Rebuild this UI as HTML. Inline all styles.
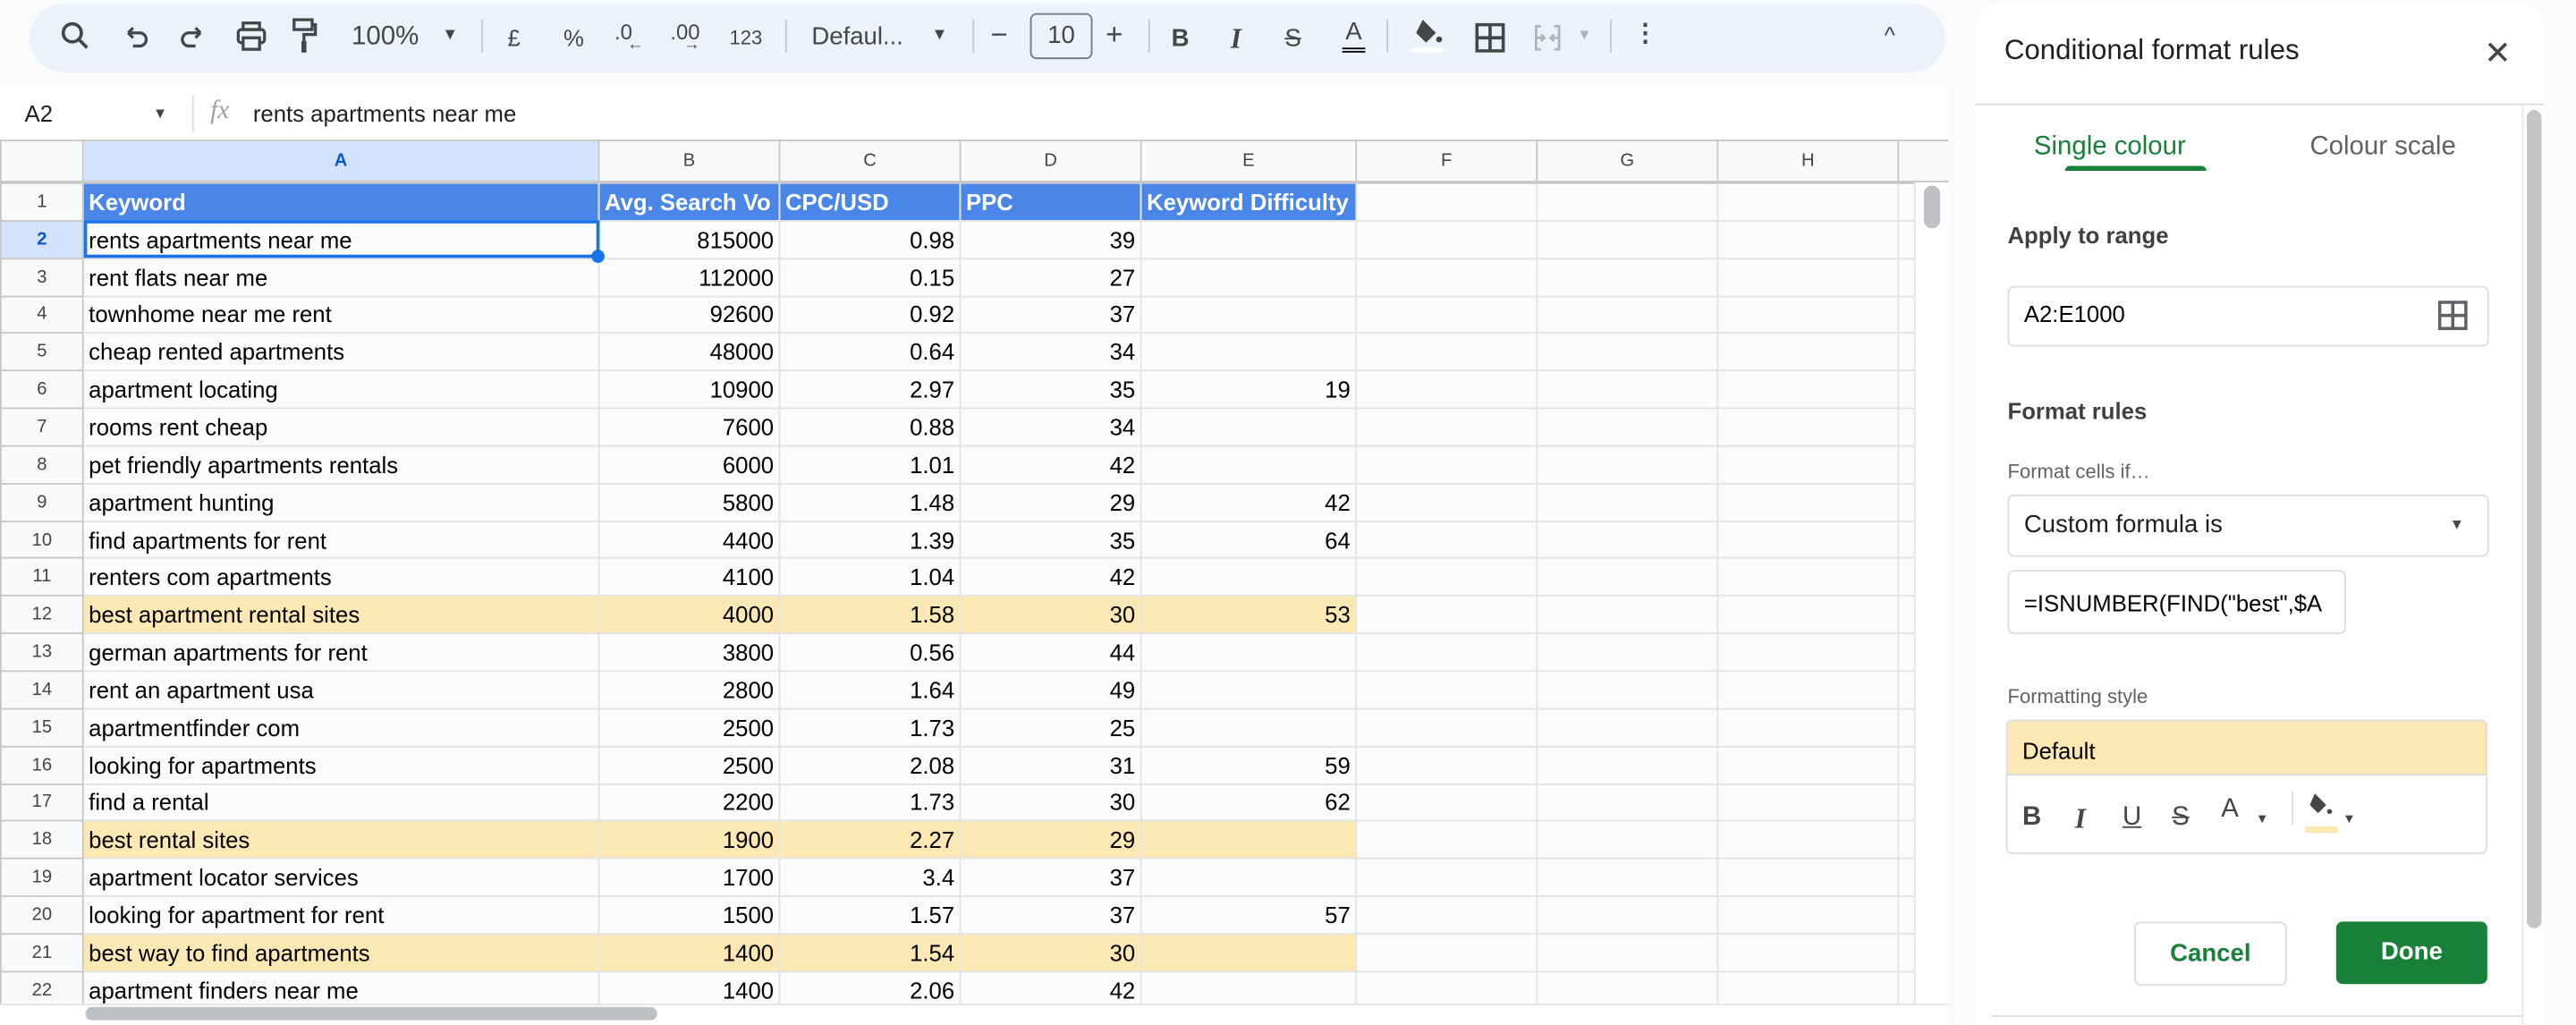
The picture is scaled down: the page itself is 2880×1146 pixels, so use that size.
<!DOCTYPE html>
<html><head><meta charset="utf-8">
<style>
html,body{margin:0;padding:0;width:2880px;height:1146px;overflow:hidden;background:#f9fbfd;}
#w{position:absolute;left:0;top:0;width:1568px;height:624px;transform:scale(1.836735);transform-origin:0 0;font-family:"Liberation Sans",Arial,sans-serif;color:#000;background:#f9fbfd;overflow:hidden}
.a{position:absolute}
.tb{left:18px;top:2px;width:1166px;height:42px;border-radius:21px;background:#edf2fa}
.ic{position:absolute;top:12px;color:#444746;font-size:15px}
.sep{position:absolute;top:12px;width:1px;height:20px;background:#c4c7c5}
table{border-collapse:collapse;table-layout:fixed;position:absolute;left:0;top:85px}
td{height:21.85px;border:1px solid #e2e3e3;padding:0 3px;font-size:14px;white-space:nowrap;overflow:hidden;line-height:20px}
td.n{background:#f8f9fa;color:#444;text-align:center;font-size:11px;border-color:#c7c7c7}
tr.h td{height:24px;background:#f8f9fa;color:#444;text-align:center;font-size:11px;border-color:#c7c7c7;border-bottom:2px solid #c7c7c7}
td.r{text-align:right}
tr.hd td.c{background:#4a86e8;color:#fff;font-weight:bold}
tr.y td.c{background:#fce8b2}
.pl{font-size:14px;color:#1f1f1f}
.box{position:absolute;border:1px solid #dadce0;border-radius:4px;background:#fff}
</style></head><body><div id="w">
<div class="a tb"></div>
<svg class="a" style="left:36px;top:12px" width="20" height="20" viewBox="0 0 20 20"><circle cx="8" cy="8" r="5.5" fill="none" stroke="#444746" stroke-width="2"/><path d="M12 12l5 5" stroke="#444746" stroke-width="2"/></svg>
<svg class="a" style="left:74px;top:13px" width="18" height="18" viewBox="0 0 18 18"><path d="M4 7h7a4 4 0 010 8H7M4 7l3-3M4 7l3 3" fill="none" stroke="#444746" stroke-width="1.8"/></svg>
<svg class="a" style="left:108px;top:13px" width="18" height="18" viewBox="0 0 18 18"><path d="M14 7H7a4 4 0 000 8h4M14 7l-3-3M14 7l-3 3" fill="none" stroke="#444746" stroke-width="1.8"/></svg>
<svg class="a" style="left:143px;top:13px" width="20" height="18" viewBox="0 0 20 18"><rect x="5" y="1" width="10" height="4" fill="none" stroke="#444746" stroke-width="1.8"/><rect x="2" y="5" width="16" height="8" rx="2" fill="none" stroke="#444746" stroke-width="1.8"/><rect x="5" y="10" width="10" height="7" fill="#edf2fa" stroke="#444746" stroke-width="1.8"/></svg>
<svg class="a" style="left:177px;top:11px" width="16" height="22" viewBox="0 0 16 22"><rect x="2" y="1" width="11" height="6" fill="none" stroke="#444746" stroke-width="1.8"/><path d="M13 4h2v6H8v4" fill="none" stroke="#444746" stroke-width="1.8"/><rect x="6.5" y="14" width="3" height="7" fill="#444746"/></svg>
<div class="ic" style="left:214px;top:14px;font-size:16px">100%</div>
<div class="ic" style="left:269px;top:16px;font-size:10px">▼</div>
<div class="sep" style="left:293px"></div>
<div class="ic" style="left:309px;top:15px;font-size:14px">£</div>
<div class="ic" style="left:343px;top:15px;font-size:14px">%</div>
<div class="ic" style="left:374px;top:12px;font-size:13px">.0<span style="font-size:10px;position:relative;top:6px;left:-3px">←</span></div>
<div class="ic" style="left:408px;top:12px;font-size:13px">.00<span style="font-size:10px;position:relative;top:6px;left:-10px">→</span></div>
<div class="ic" style="left:444px;top:16px;font-size:12px">123</div>
<div class="sep" style="left:478px"></div>
<div class="ic" style="left:494px;top:14px;font-size:15px">Defaul...</div>
<div class="ic" style="left:567px;top:16px;font-size:10px">▼</div>
<div class="sep" style="left:592px"></div>
<div class="ic" style="left:603px;top:11px;font-size:18px">−</div>
<div class="a" style="left:627px;top:8px;width:36px;height:26px;border:1px solid #747775;border-radius:4px;text-align:center;line-height:26px;font-size:15px;color:#444746">10</div>
<div class="ic" style="left:673px;top:11px;font-size:18px">+</div>
<div class="sep" style="left:699px"></div>
<div class="ic" style="left:713px;top:15px;font-weight:bold">B</div>
<div class="ic" style="left:749px;top:14px;font-style:italic;font-family:'Liberation Serif',serif;font-size:17px;font-weight:bold">I</div>
<div class="ic" style="left:782px;top:15px;text-decoration:line-through">S</div>
<div class="ic" style="left:817px;top:11px;border-bottom:3px double #000;padding:0 2px 1px">A</div>
<div class="sep" style="left:844px"></div>
<svg class="a" style="left:858px;top:10px" width="22" height="24" viewBox="0 0 22 24"><path d="M8 2l8 8-6 6-6-6z" fill="#444746"/><circle cx="18" cy="14" r="1.8" fill="#444746"/><rect x="1" y="19" width="20" height="3" fill="#fff"/></svg>
<svg class="a" style="left:898px;top:14px" width="18" height="18" viewBox="0 0 18 18"><path d="M1 1h16v16H1zM9 1v16M1 9h16" fill="none" stroke="#444746" stroke-width="2"/></svg>
<svg class="a" style="left:933px;top:14px" width="18" height="18" viewBox="0 0 18 18"><path d="M5 2H2v14h3M13 2h3v14h-3M2 9h5M16 9h-5M5 7l2 2-2 2M13 7l-2 2 2 2" fill="none" stroke="#b0b3b5" stroke-width="1.5"/></svg>
<div class="ic" style="left:960px;top:16px;font-size:9px;color:#b0b3b5">▼</div>
<div class="sep" style="left:980px"></div>
<div class="ic" style="left:994px;top:11px;font-weight:bold">⋮</div>
<div class="ic" style="left:1147px;top:13px;font-size:14px">^</div>

<div class="a" style="left:0;top:52px;width:1186px;height:33px;background:#fff"></div>
<div class="a pl" style="left:15px;top:61px;font-size:14px">A2</div>
<div class="a" style="left:93px;top:64px;font-size:9px;color:#444">▼</div>
<div class="a" style="left:117px;top:58px;width:1px;height:22px;background:#dadce0"></div>
<div class="a" style="left:128px;top:59px;font-family:'Liberation Serif',serif;font-style:italic;color:#9aa0a6;font-size:16px">fx</div>
<div class="a pl" style="left:154px;top:61px;font-size:14px">rents apartments near me</div>

<table>
<colgroup><col style="width:50px"><col style="width:314px"><col style="width:110px"><col style="width:110px"><col style="width:110px"><col style="width:131px"><col style="width:110px"><col style="width:110px"><col style="width:110px"><col style="width:40px"></colgroup>
<tr class="h"><td></td><td style="background:#d3e3fd;color:#0b57d0;font-weight:bold">A</td><td>B</td><td>C</td><td>D</td><td>E</td><td>F</td><td>G</td><td>H</td><td></td></tr>
<tr class="hd"><td class="n">1</td><td class="c">Keyword</td><td class="c">Avg. Search Vo</td><td class="c">CPC/USD</td><td class="c">PPC</td><td class="c">Keyword Difficulty</td><td></td><td></td><td></td><td></td></tr>
<tr><td class="n" style="background:#d3e3fd;color:#0b57d0;font-weight:bold">2</td><td class="c" style="outline:2px solid #1a73e8;outline-offset:-2px">rents apartments near me</td><td class="r">815000</td><td class="r">0.98</td><td class="r">39</td><td></td><td></td><td></td><td></td><td></td></tr>
<tr><td class="n">3</td><td>rent flats near me</td><td class="r">112000</td><td class="r">0.15</td><td class="r">27</td><td></td><td></td><td></td><td></td><td></td></tr>
<tr><td class="n">4</td><td>townhome near me rent</td><td class="r">92600</td><td class="r">0.92</td><td class="r">37</td><td></td><td></td><td></td><td></td><td></td></tr>
<tr><td class="n">5</td><td>cheap rented apartments</td><td class="r">48000</td><td class="r">0.64</td><td class="r">34</td><td></td><td></td><td></td><td></td><td></td></tr>
<tr><td class="n">6</td><td>apartment locating</td><td class="r">10900</td><td class="r">2.97</td><td class="r">35</td><td class="r">19</td><td></td><td></td><td></td><td></td></tr>
<tr><td class="n">7</td><td>rooms rent cheap</td><td class="r">7600</td><td class="r">0.88</td><td class="r">34</td><td></td><td></td><td></td><td></td><td></td></tr>
<tr><td class="n">8</td><td>pet friendly apartments rentals</td><td class="r">6000</td><td class="r">1.01</td><td class="r">42</td><td></td><td></td><td></td><td></td><td></td></tr>
<tr><td class="n">9</td><td>apartment hunting</td><td class="r">5800</td><td class="r">1.48</td><td class="r">29</td><td class="r">42</td><td></td><td></td><td></td><td></td></tr>
<tr><td class="n">10</td><td>find apartments for rent</td><td class="r">4400</td><td class="r">1.39</td><td class="r">35</td><td class="r">64</td><td></td><td></td><td></td><td></td></tr>
<tr><td class="n">11</td><td>renters com apartments</td><td class="r">4100</td><td class="r">1.04</td><td class="r">42</td><td></td><td></td><td></td><td></td><td></td></tr>
<tr class="y"><td class="n">12</td><td class="c">best apartment rental sites</td><td class="c r">4000</td><td class="c r">1.58</td><td class="c r">30</td><td class="c r">53</td><td></td><td></td><td></td><td></td></tr>
<tr><td class="n">13</td><td>german apartments for rent</td><td class="r">3800</td><td class="r">0.56</td><td class="r">44</td><td></td><td></td><td></td><td></td><td></td></tr>
<tr><td class="n">14</td><td>rent an apartment usa</td><td class="r">2800</td><td class="r">1.64</td><td class="r">49</td><td></td><td></td><td></td><td></td><td></td></tr>
<tr><td class="n">15</td><td>apartmentfinder com</td><td class="r">2500</td><td class="r">1.73</td><td class="r">25</td><td></td><td></td><td></td><td></td><td></td></tr>
<tr><td class="n">16</td><td>looking for apartments</td><td class="r">2500</td><td class="r">2.08</td><td class="r">31</td><td class="r">59</td><td></td><td></td><td></td><td></td></tr>
<tr><td class="n">17</td><td>find a rental</td><td class="r">2200</td><td class="r">1.73</td><td class="r">30</td><td class="r">62</td><td></td><td></td><td></td><td></td></tr>
<tr class="y"><td class="n">18</td><td class="c">best rental sites</td><td class="c r">1900</td><td class="c r">2.27</td><td class="c r">29</td><td class="c"></td><td></td><td></td><td></td><td></td></tr>
<tr><td class="n">19</td><td>apartment locator services</td><td class="r">1700</td><td class="r">3.4</td><td class="r">37</td><td></td><td></td><td></td><td></td><td></td></tr>
<tr><td class="n">20</td><td>looking for apartment for rent</td><td class="r">1500</td><td class="r">1.57</td><td class="r">37</td><td class="r">57</td><td></td><td></td><td></td><td></td></tr>
<tr class="y"><td class="n">21</td><td class="c">best way to find apartments</td><td class="c r">1400</td><td class="c r">1.54</td><td class="c r">30</td><td class="c"></td><td></td><td></td><td></td><td></td></tr>
<tr><td class="n">22</td><td>apartment finders near me</td><td class="r">1400</td><td class="r">2.06</td><td class="r">42</td><td></td><td></td><td></td><td></td><td></td></tr>
</table>
<div class="a" style="left:360px;top:152px;width:8px;height:8px;border-radius:50%;background:#1a73e8"></div>
<div class="a" style="left:1165px;top:111px;width:21px;height:513px;background:#fff;border-left:1px solid #e2e3e3"></div>
<div class="a" style="left:1171px;top:113px;width:10px;height:26px;border-radius:5px;background:#bdc1c6"></div>
<div class="a" style="left:0;top:611px;width:1186px;height:13px;background:#fff;border-top:1px solid #e2e3e3"></div>
<div class="a" style="left:52px;top:613px;width:348px;height:8px;border-radius:4px;background:#bdc1c6"></div>
<div class="a" style="left:1186px;top:0;width:16px;height:624px;background:#f9fbfd"></div>

<div class="a" style="left:1202px;top:2px;width:347px;height:640px;background:#fff;border-radius:16px 16px 0 0"></div>
<div class="a" style="left:1220px;top:21px;font-size:17px;color:#1f1f1f">Conditional format rules</div>
<div class="a" style="left:1512px;top:20px;font-size:20px;color:#444746">✕</div>
<div class="a" style="left:1202px;top:63px;width:347px;height:1px;background:#dadce0"></div>
<div class="a" style="left:1535px;top:64px;width:1px;height:560px;background:#e8eaed"></div>
<div class="a" style="left:1538px;top:67px;width:9px;height:498px;border-radius:5px;background:#c4c4c4"></div>
<div class="a" style="left:1238px;top:81px;font-size:16px;color:#188038">Single colour</div>
<div class="a" style="left:1257px;top:101px;width:86px;height:3px;border-radius:3px 3px 0 0;background:#188038"></div>
<div class="a" style="left:1406px;top:81px;font-size:16px;color:#5f6368">Colour scale</div>
<div class="a" style="left:1222px;top:135px;font-size:14px;color:#1f1f1f;font-weight:bold;opacity:.85">Apply to range</div>
<div class="box" style="left:1222px;top:174px;width:291px;height:35px"></div>
<div class="a" style="left:1232px;top:183px;font-size:14px">A2:E1000</div>
<svg class="a" style="left:1484px;top:183px" width="18" height="18" viewBox="0 0 18 18"><path d="M1 1h16v16H1zM9 1v16M1 9h16" fill="none" stroke="#5f6368" stroke-width="2"/></svg>
<div class="a" style="left:1222px;top:242px;font-size:14px;color:#1f1f1f;font-weight:bold;opacity:.85">Format rules</div>
<div class="a" style="left:1222px;top:280px;font-size:12px;color:#5f6368">Format cells if…</div>
<div class="box" style="left:1222px;top:301px;width:291px;height:36px"></div>
<div class="a" style="left:1232px;top:311px;font-size:15px;color:#1f1f1f">Custom formula is</div>
<div class="a" style="left:1491px;top:314px;font-size:9px;color:#444746">▼</div>
<div class="box" style="left:1222px;top:347px;width:204px;height:37px;overflow:hidden"><div style="position:absolute;left:9px;top:11px;font-size:14px;white-space:nowrap">=ISNUMBER(FIND("best",$A</div></div>
<div class="a" style="left:1222px;top:417px;font-size:12px;color:#5f6368">Formatting style</div>
<div class="box" style="left:1221px;top:438px;width:291px;height:80px;overflow:hidden"><div style="height:32px;background:#fce8b2;border-bottom:1px solid #dadce0"></div></div>
<div class="a" style="left:1231px;top:449px;font-size:14px">Default</div>
<div class="a" style="left:1231px;top:489px;font-size:16px;font-weight:bold;color:#444746">B</div>
<div class="a" style="left:1263px;top:489px;font-size:17px;font-weight:bold;font-style:italic;font-family:'Liberation Serif',serif;color:#444746">I</div>
<div class="a" style="left:1292px;top:489px;font-size:16px;text-decoration:underline;color:#444746">U</div>
<div class="a" style="left:1322px;top:489px;font-size:16px;text-decoration:line-through;color:#444746">S</div>
<div class="a" style="left:1352px;top:484px;font-size:16px;color:#444746">A</div>
<div class="a" style="left:1373px;top:494px;font-size:8px;color:#444746">▼</div>
<div class="a" style="left:1395px;top:482px;width:1px;height:20px;background:#dadce0"></div>
<svg class="a" style="left:1403px;top:481px" width="20" height="30" viewBox="0 0 20 30"><path d="M6 2l7 7-5 5-5-5z" fill="#444746"/><circle cx="15" cy="13" r="1.5" fill="#444746"/><rect x="0" y="22" width="20" height="4" fill="#fce8b2"/></svg>
<div class="a" style="left:1426px;top:494px;font-size:8px;color:#444746">▼</div>
<div class="box" style="left:1299px;top:561px;width:91px;height:37px;text-align:center;line-height:37px;color:#188038;font-size:15px;font-weight:bold">Cancel</div>
<div class="a" style="left:1422px;top:561px;width:92px;height:38px;border-radius:4px;background:#188038;color:#fff;text-align:center;line-height:38px;font-size:15px;font-weight:bold">Done</div>
<div class="a" style="left:1212px;top:618px;width:323px;height:1px;background:#dadce0"></div>
</div></body></html>
